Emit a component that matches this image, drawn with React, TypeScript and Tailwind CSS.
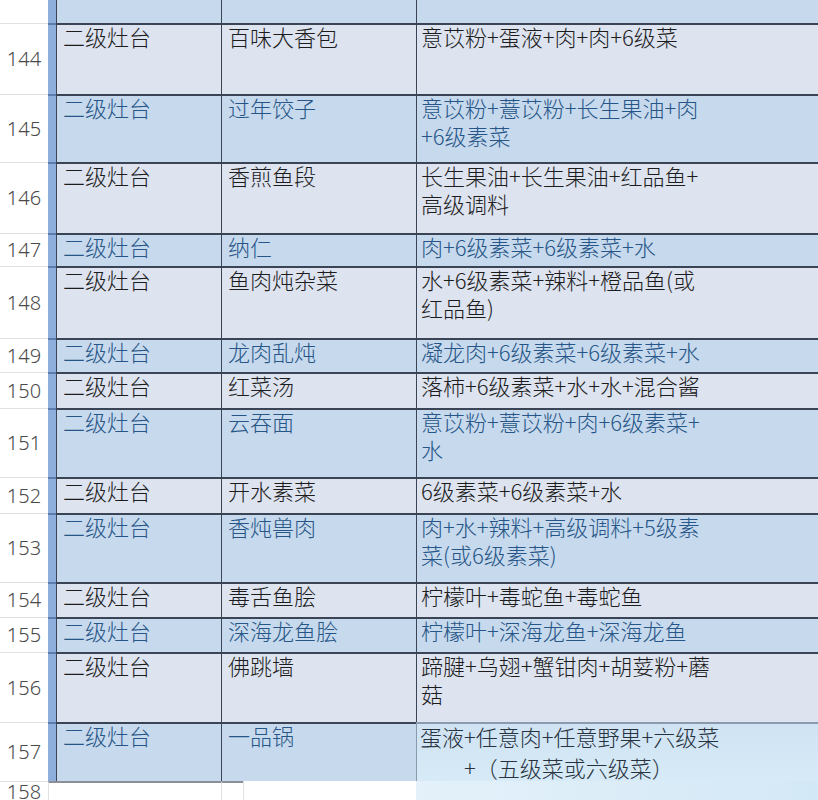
import React from "react";

type Row = {
  num: string;
  a: string;
  b: string;
  c: string[];
  h: string;
  blue: boolean;
};

const rows: Row[] = [
  { num: "144", a: "二级灶台", b: "百味大香包", c: ["意苡粉+蛋液+肉+肉+6级菜"], h: "h-[71px]", blue: false },
  { num: "145", a: "二级灶台", b: "过年饺子", c: ["意苡粉+薏苡粉+长生果油+肉", "+6级素菜"], h: "h-[68px]", blue: true },
  { num: "146", a: "二级灶台", b: "香煎鱼段", c: ["长生果油+长生果油+红品鱼+", "高级调料"], h: "h-[71px]", blue: false },
  { num: "147", a: "二级灶台", b: "纳仁", c: ["肉+6级素菜+6级素菜+水"], h: "h-[33px]", blue: true },
  { num: "148", a: "二级灶台", b: "鱼肉炖杂菜", c: ["水+6级素菜+辣料+橙品鱼(或", "红品鱼)"], h: "h-[72px]", blue: false },
  { num: "149", a: "二级灶台", b: "龙肉乱炖", c: ["凝龙肉+6级素菜+6级素菜+水"], h: "h-[34px]", blue: true },
  { num: "150", a: "二级灶台", b: "红菜汤", c: ["落柿+6级素菜+水+水+混合酱"], h: "h-[36px]", blue: false },
  { num: "151", a: "二级灶台", b: "云吞面", c: ["意苡粉+薏苡粉+肉+6级素菜+", "水"], h: "h-[69px]", blue: true },
  { num: "152", a: "二级灶台", b: "开水素菜", c: ["6级素菜+6级素菜+水"], h: "h-[36px]", blue: false },
  { num: "153", a: "二级灶台", b: "香炖兽肉", c: ["肉+水+辣料+高级调料+5级素", "菜(或6级素菜)"], h: "h-[69px]", blue: true },
  { num: "154", a: "二级灶台", b: "毒舌鱼脍", c: ["柠檬叶+毒蛇鱼+毒蛇鱼"], h: "h-[35px]", blue: false },
  { num: "155", a: "二级灶台", b: "深海龙鱼脍", c: ["柠檬叶+深海龙鱼+深海龙鱼"], h: "h-[35px]", blue: true },
  { num: "156", a: "二级灶台", b: "佛跳墙", c: ["蹄腱+乌翅+蟹钳肉+胡荽粉+蘑", "菇"], h: "h-[70px]", blue: false },
];

function DataRow({ r }: { r: Row }) {
  const bg = r.blue ? "bg-[#c7d9ed]" : "bg-[#dde3ef]";
  const fg = r.blue ? "text-[#265687]" : "text-[#1c1c1c]";
  return (
    <div className={`flex ${r.h}`}>
      <div className="w-[48px] shrink-0 bg-white border-t border-[#e2e2e2] flex items-center justify-center font-['Noto_Sans',sans-serif] font-light text-[20px] text-[#4a4a4a]">
        {r.num}
      </div>
      <div className="w-[8px] shrink-0 bg-[#8eaedb] border-t-2 border-[#5d7cae]" />
      <div className={`w-[165px] shrink-0 ${bg} ${fg} border-l border-t-2 border-[#3b4455] px-[6px] leading-[22px]`}>
        {r.a}
      </div>
      <div className={`w-[195px] shrink-0 ${bg} ${fg} border-l border-t-2 border-[#3b4455] px-[6px] leading-[22px]`}>
        {r.b}
      </div>
      <div className={`flex-1 ${bg} ${fg} border-l border-t-2 border-[#3b4455] px-[4px] leading-[22px] flex flex-col gap-[6px]`}>
        {r.c.map((line) => (
          <div key={line}>{line}</div>
        ))}
      </div>
    </div>
  );
}

export default function App() {
  return (
    <div className="w-[818px] h-[800px] overflow-hidden bg-white font-['Noto_Sans_CJK_SC','Noto_Sans',sans-serif] font-light text-[22px]">
      {/* header remnant */}
      <div className="flex h-[23px]">
        <div className="w-[48px] shrink-0 bg-white" />
        <div className="w-[8px] shrink-0 bg-[#8eaedb]" />
        <div className="w-[165px] shrink-0 bg-[#c7d9ed] border-l border-[#3b4455]" />
        <div className="w-[195px] shrink-0 bg-[#c7d9ed] border-l border-[#3b4455]" />
        <div className="flex-1 bg-[#c7d9ed] border-l border-[#3b4455]" />
      </div>

      {rows.map((r) => (
        <DataRow key={r.num} r={r} />
      ))}

      {/* 157 with smudged highlight over the recipe */}
      <div className="flex h-[59px]">
        <div className="w-[48px] shrink-0 bg-white border-t border-[#e2e2e2] flex items-center justify-center font-['Noto_Sans',sans-serif] font-light text-[20px] text-[#4a4a4a]">
          157
        </div>
        <div className="w-[8px] shrink-0 bg-[#8eaedb] border-t-2 border-[#5d7cae]" />
        <div className="w-[165px] shrink-0 bg-[#c7d9ed] text-[#265687] border-l border-t-2 border-[#3b4455] px-[6px] leading-[22px]">
          二级灶台
        </div>
        <div className="w-[195px] shrink-0 bg-[#c7d9ed] text-[#265687] border-l border-t-2 border-[#3b4455] px-[6px] leading-[22px]">
          一品锅
        </div>
        <div className="flex-1 bg-gradient-to-b from-[#cfe3f3] to-[#d6eaf7] text-[#28323e] border-l border-t-2 border-[#8a9bb0] px-[3px] pt-[1px] leading-[22px] flex flex-col gap-[9px]">
          <div>蛋液+任意肉+任意野果+六级菜</div>
          <div className="pl-[44px]">+（五级菜或六级菜）</div>
        </div>
      </div>

      <div className="flex h-[19px]">
        <div className="w-[48px] shrink-0 bg-white border-t border-[#e2e2e2] flex items-start justify-center font-['Noto_Sans',sans-serif] font-light text-[20px] leading-[18px] pt-[1px] text-[#4a4a4a]">
          158
        </div>
        <div className="w-[8px] shrink-0 bg-white border-l border-t-2 border-t-[#8a8f98] border-l-[#e2e2e2]" />
        <div className="w-[165px] shrink-0 bg-white border-t-2 border-[#8a8f98]" />
        <div className="w-[22px] shrink-0 bg-white border-l border-t-2 border-l-[#e2e2e2] border-t-[#8a8f98]" />
        <div className="w-[173px] shrink-0 bg-white border-l border-[#e2e2e2]" />
        <div className="flex-1 bg-gradient-to-r from-[#e4f1fa] to-[#d3e8f6]" />
      </div>
    </div>
  );
}
